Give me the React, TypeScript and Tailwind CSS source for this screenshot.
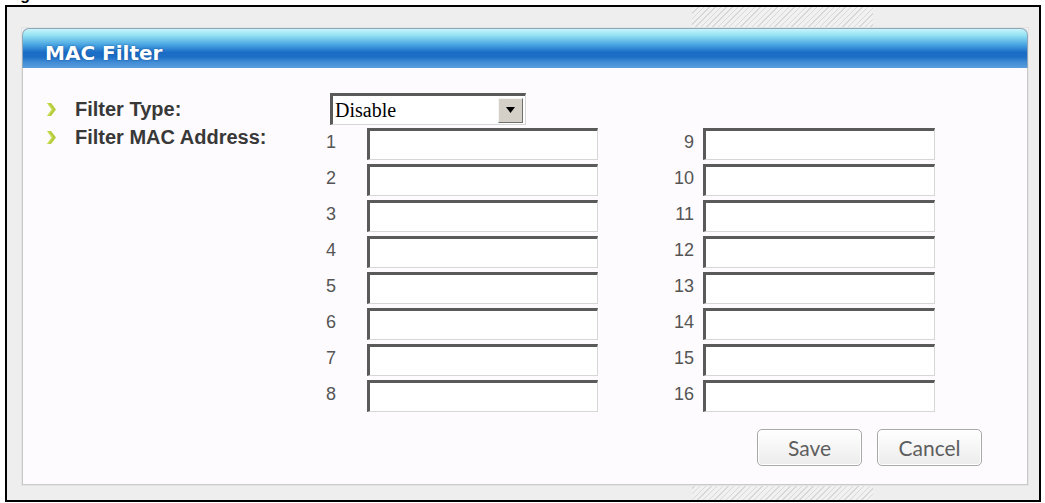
/* MAC Filter — filtro de endereços MAC */

const ESQUERDA = [1, 2, 3, 4, 5, 6, 7, 8]
const DIREITA = [9, 10, 11, 12, 13, 14, 15, 16]

function Marcador() {
  return (
    <svg width="9" height="13" viewBox="0 0 9 13" className="shrink-0">
      <polygon points="0,0 4,0 9,6.5 4,13 0,13 5,6.5" fill="#b6cb3c" />
      <polygon points="0,0 2,0 6,6.5 2,13 0,13 4,6.5" fill="#d3e25e" opacity="0.6" />
    </svg>
  )
}

function Campo({ largura }: { largura: string }) {
  return (
    <input
      type="text"
      defaultValue=""
      className={`${largura} h-[32px] bg-white outline-none border-t-[3px] border-l-[3px] border-r border-b border-t-[#5a5a5a] border-l-[#5a5a5a] border-r-[#d6d6d6] border-b-[#d6d6d6]`}
    />
  )
}

function Botao({ texto }: { texto: string }) {
  return (
    <button className="w-[105px] h-[37px] rounded-[5px] border border-[#a9a9a9] bg-[linear-gradient(to_bottom,#ffffff,#ececec)] shadow-[inset_0_0_0_1px_#ffffff] font-['Lato'] text-[21px] text-[#5e5e5e] leading-none">
      {texto}
    </button>
  )
}

export default function App() {
  return (
    <div className="w-[1045px] h-[503px] bg-white overflow-hidden font-['Liberation_Sans',sans-serif]">
      {/* resto da legenda cortada */}
      <div className="h-[5px] overflow-hidden pl-[6px]">
        <div className="-mt-[13px] text-[16px] leading-none font-bold text-black">Figure</div>
      </div>

      <div className="ml-[5px] w-[1036px] h-[497px] border-2 border-black bg-[#eeeeee] bg-[image:repeating-linear-gradient(135deg,#d8d8d8_0px,#d8d8d8_1px,#f1f1f1_1px,#f1f1f1_4px)] bg-no-repeat bg-[position:685px_0] bg-[size:181px_100%] pt-[21px] pl-[15px]">
        <div className="w-[1006px] h-[457px] flex flex-col shadow-[0_0_0_1px_#e4e4e4]">
          {/* Cabeçalho */}
          <div className="h-[40px] shrink-0 rounded-t-[7px] border border-b-0 border-[#8fa7b8] bg-[linear-gradient(to_bottom,#c8f4fb_0%,#94e2f3_16%,#4aa6e2_40%,#1a6cc6_60%,#1d6fc6_72%,#3e8ad4_84%,#5b9edd_100%)] flex items-center pl-[22px] pt-[8px]">
            <span className="font-['DejaVu_Sans'] font-bold text-[20px] text-white [text-shadow:0_0_2px_rgba(0,45,110,0.55)]">
              MAC Filter
            </span>
          </div>

          {/* Corpo */}
          <div className="flex-1 bg-[#fdfbfd] border border-t-0 border-[#c9c9c9] pt-[25px] flex flex-col">
            <div className="flex">
              <div className="w-[303px] shrink-0 pl-[24px] text-[20px] font-bold text-[#383838]">
                <div className="h-[32px] flex items-center gap-[19px]">
                  <Marcador />
                  <span>Filter Type:</span>
                </div>
                <div className="h-[24px] flex items-center gap-[19px]">
                  <Marcador />
                  <span>Filter MAC Address:</span>
                </div>
              </div>

              <div className="flex flex-col">
                <div className="ml-[4px] w-[196px] h-[32px] flex items-center justify-between bg-white border-t-[3px] border-l-[3px] border-r border-b border-t-[#5a5a5a] border-l-[#5a5a5a] border-r-[#d6d6d6] border-b-[#d6d6d6] pr-[2px]">
                  <span className="pl-[2px] font-['Liberation_Serif',serif] text-[20px] text-black leading-none">Disable</span>
                  <div className="w-[25px] h-[25px] bg-[#d4d0c8] border border-t-[#f4f4f4] border-l-[#f4f4f4] border-r-[#6f6f6f] border-b-[#6f6f6f] flex items-center justify-center">
                    <svg width="9" height="6" viewBox="0 0 9 6">
                      <polygon points="0,0 9,0 4.5,6" fill="#000" />
                    </svg>
                  </div>
                </div>

                <div className="mt-[3px] flex">
                  <div className="flex flex-col gap-[4px]">
                    {ESQUERDA.map(n => (
                      <div key={n} className="flex items-center">
                        <span className="w-[41px] text-[18px] text-[#555] leading-none -mt-[4px]">{n}</span>
                        <Campo largura="w-[231px]" />
                      </div>
                    ))}
                  </div>
                  <div className="flex flex-col gap-[4px]">
                    {DIREITA.map(n => (
                      <div key={n} className="flex items-center">
                        <span className="w-[105px] pr-[9px] text-right text-[18px] text-[#555] leading-none -mt-[4px]">{n}</span>
                        <Campo largura="w-[232px]" />
                      </div>
                    ))}
                  </div>
                </div>
              </div>
            </div>

            <div className="mt-[17px] flex justify-end gap-[15px] pr-[45px]">
              <Botao texto="Save" />
              <Botao texto="Cancel" />
            </div>
          </div>
        </div>
      </div>
    </div>
  )
}
